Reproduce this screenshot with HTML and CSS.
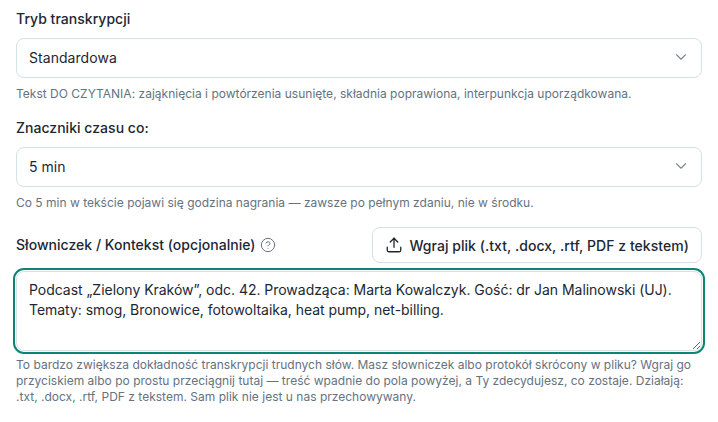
FILE: index.html
```html
<!DOCTYPE html>
<html lang="pl">
<head>
  <meta charset="UTF-8" />
  <meta name="viewport" content="width=device-width, initial-scale=1.0"/>
  <title>Transkrypcja</title>
  <link rel="stylesheet" href="styles.css">
</head>
<body>
  <div class="form">
    <div class="field">
      <label class="label">Tryb transkrypcji</label>
      <div class="select">
        <span>Standardowa</span>
        <svg class="chevron" viewBox="0 0 24 24"><path d="m6 9 6 6 6-6"/></svg>
      </div>
      <p class="help">Tekst DO CZYTANIA: zająknięcia i powtórzenia usunięte, składnia poprawiona, interpunkcja uporządkowana.</p>
    </div>

    <div class="field">
      <label class="label">Znaczniki czasu co:</label>
      <div class="select">
        <span>5 min</span>
        <svg class="chevron" viewBox="0 0 24 24"><path d="m6 9 6 6 6-6"/></svg>
      </div>
      <p class="help">Co 5 min w tekście pojawi się godzina nagrania — zawsze po pełnym zdaniu, nie w środku.</p>
    </div>

    <div class="field">
      <div class="label-row">
        <div class="label-group">
          <label class="label">Słowniczek / Kontekst (opcjonalnie)</label>
          <svg class="info" viewBox="0 0 24 24"><circle cx="12" cy="12" r="10"/><path d="M9.1 9a3 3 0 0 1 5.8 1c0 2-3 3-3 3"/><path d="M12 17h.01"/></svg>
        </div>
        <button class="upload-btn">
          <svg class="upload" viewBox="0 0 24 24"><path d="M21 15v4a2 2 0 0 1-2 2H5a2 2 0 0 1-2-2v-4"/><path d="m17 8-5-5-5 5"/><path d="M12 3v12"/></svg>
          Wgraj plik (.txt, .docx, .rtf, PDF z tekstem)
        </button>
      </div>
      <textarea class="textarea" rows="3">Podcast „Zielony Kraków”, odc. 42. Prowadząca: Marta Kowalczyk. Gość: dr Jan Malinowski (UJ). Tematy: smog, Bronowice, fotowoltaika, heat pump, net-billing.</textarea>
      <p class="help help-long">To bardzo zwiększa dokładność transkrypcji trudnych słów. Masz słowniczek albo protokół skrócony w pliku? Wgraj go przyciskiem albo po prostu przeciągnij tutaj — treść wpadnie do pola powyżej, a Ty zdecydujesz, co zostaje. Działają: .txt, .docx, .rtf, PDF z tekstem. Sam plik nie jest u nas przechowywany.</p>
    </div>
  </div>
</body>
</html>
```

FILE: styles.css
```css
* {
  box-sizing: border-box;
  margin: 0;
  padding: 0;
}

body {
  font-family: Inter, "Liberation Sans", sans-serif;
  background-color: #fff;
  color: #1c2733;
  padding: 9px 16px 0;
}

.form {
  width: 686px;
  display: flex;
  flex-direction: column;
  gap: 16px;
}

.label {
  display: block;
  font-size: 14px;
  line-height: 20px;
  font-weight: 500;
  letter-spacing: 0.03px;
}

.field > .label {
  margin-bottom: 9px;
}

.select {
  position: relative;
  height: 40px;
  border: 1px solid #d3e2e3;
  border-radius: 8px;
  padding: 0 12px;
  display: flex;
  align-items: center;
  font-size: 14px;
  line-height: 20px;
  letter-spacing: 0.05px;
}

.chevron {
  position: absolute;
  right: 11px;
  top: 9px;
  width: 18px;
  height: 18px;
  fill: none;
  stroke: #7c8894;
  stroke-width: 1.5;
  stroke-linecap: round;
  stroke-linejoin: round;
}

.help {
  margin-top: 8px;
  font-size: 12px;
  line-height: 16px;
  color: #65727f;
  letter-spacing: 0.01px;
}

.help-long {
  margin-top: 6px;
}

.label-row {
  display: flex;
  align-items: center;
  justify-content: space-between;
  margin-bottom: 8px;
}

.label-group {
  display: flex;
  align-items: center;
  gap: 5px;
}

.info {
  width: 16px;
  height: 16px;
  fill: none;
  stroke: #65727f;
  stroke-width: 1.5;
  stroke-linecap: round;
  stroke-linejoin: round;
}

.upload-btn {
  height: 36px;
  padding: 0 12px;
  display: flex;
  align-items: center;
  gap: 6px;
  font-family: inherit;
  font-size: 14px;
  font-weight: 500;
  letter-spacing: 0.05px;
  color: #1c2733;
  background-color: #fff;
  border: 1px solid #d3e2e3;
  border-radius: 8px;
}

.upload {
  width: 18px;
  height: 18px;
  fill: none;
  stroke: #1c2733;
  stroke-width: 1.75;
  stroke-linecap: round;
  stroke-linejoin: round;
}

.textarea {
  display: block;
  width: 100%;
  height: 80px;
  padding: 8px 12px;
  font-family: inherit;
  font-size: 14px;
  line-height: 20px;
  letter-spacing: -0.03px;
  color: #1c2733;
  border: 1px solid #d3e2e3;
  border-radius: 8px;
  outline: 2px solid #0b8574;
  outline-offset: 1px;
}
```
